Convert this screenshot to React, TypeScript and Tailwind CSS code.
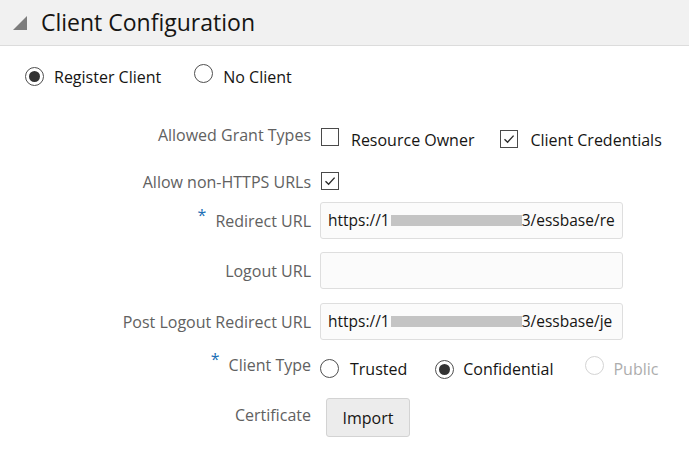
import React from 'react';

const font = { fontFamily: '"Open Sans", "Noto Sans", sans-serif' };

const Radio = ({ checked, disabled }: { checked?: boolean; disabled?: boolean }) => (
    <span
        className={`inline-flex h-[19px] w-[19px] shrink-0 items-center justify-center rounded-full border bg-white ${disabled ? 'border-[#d4d4d4]' : 'border-[#4f4f4f]'}`}
    >
        {checked && <span className="h-[11px] w-[11px] rounded-full bg-[#333]" />}
    </span>
);

const Checkbox = ({ checked }: { checked?: boolean }) => (
    <span className="inline-flex h-[18px] w-[18px] shrink-0 items-center justify-center border border-[#4a4a4a] bg-white">
        {checked && (
            <svg width="14" height="14" viewBox="0 0 14 14" fill="none">
                <path d="M2.5 7.2 L5.6 10.2 L11.6 3.6" stroke="#2b2b2b" strokeWidth="1.4" />
            </svg>
        )}
    </span>
);

const Label = ({ children, required }: { children: React.ReactNode; required?: boolean }) => (
    <div className="w-[320px] shrink-0 pr-[9px] text-right text-[#616161]">
        {required && <span className="relative -top-[6px] mr-[9px] text-[#1b6fb5]">*</span>}
        {children}
    </div>
);

const TextBox = ({ children }: { children?: React.ReactNode }) => (
    <div className="flex h-[37px] w-[303px] items-center overflow-hidden whitespace-nowrap rounded-[3px] border border-[#dedede] bg-[#fbfbfb] pl-[7px] text-[15.5px] text-[#161513]">
        {children}
    </div>
);

// part of the address is blurred out in the picture
const Masked = ({ pre, post }: { pre: string; post: string }) => (
    <span className="flex items-baseline">
        {pre}
        <span className="ml-[1px] inline-block h-[11px] w-[131px] bg-[#c4c4c4]" />
        {post}
    </span>
);

export default function App() {
    return (
        <div className="h-[468px] w-[689px] bg-white text-[16px]" style={font}>
            <div className="flex h-[46px] items-center border-b border-[#dcdcdc] bg-[#f1f1f1] pl-[13px]">
                <svg width="15" height="14" viewBox="0 0 15 14" className="mt-[1px]">
                    <polygon points="14,0 14,14 0,14" fill="#7d7d7d" />
                </svg>
                <span className="ml-[13px] text-[23px] text-[#161513]">Client Configuration</span>
            </div>

            <div className="flex items-center pl-[25px] pt-[18px] text-[#161513]">
                <Radio checked />
                <span className="ml-[10px]">Register Client</span>
                <span className="ml-[33px]"><Radio /></span>
                <span className="ml-[10px]">No Client</span>
            </div>

            <div className="mt-[34px] flex flex-col">
                <div className="flex items-start">
                    <Label>Allowed Grant Types</Label>
                    <div className="flex items-center pt-[5px] text-[#161513]">
                        <span className="ml-[1px]"><Checkbox /></span>
                        <span className="ml-[12px]">Resource Owner</span>
                        <span className="ml-[26px]"><Checkbox checked /></span>
                        <span className="ml-[12px]">Client Credentials</span>
                    </div>
                </div>

                <div className="mt-[18px] flex items-center">
                    <Label>Allow non-HTTPS URLs</Label>
                    <span className="ml-[1px]"><Checkbox checked /></span>
                </div>

                <div className="mt-[8px] flex items-center">
                    <Label required>Redirect URL</Label>
                    <TextBox><Masked pre="https://1" post="3/essbase/re" /></TextBox>
                </div>

                <div className="mt-[13px] flex items-center">
                    <Label>Logout URL</Label>
                    <TextBox />
                </div>

                <div className="mt-[14px] flex items-center">
                    <Label>Post Logout Redirect URL</Label>
                    <TextBox><Masked pre="https://1" post="3/essbase/je" /></TextBox>
                </div>

                <div className="mt-[13px] flex items-start">
                    <Label required>Client Type</Label>
                    <div className="flex items-center pt-[3px] text-[#161513]">
                        <Radio />
                        <span className="ml-[11px]">Trusted</span>
                        <span className="ml-[28px]"><Radio checked /></span>
                        <span className="ml-[9px]">Confidential</span>
                        <span className="ml-[32px]"><Radio disabled /></span>
                        <span className="ml-[9px] text-[#adadad]">Public</span>
                    </div>
                </div>

                <div className="mt-[22px] flex items-start">
                    <Label>Certificate</Label>
                    <button className="ml-[6px] -mt-[5px] flex h-[39px] w-[84px] items-center justify-center rounded-[3px] border border-[#d3d3d3] bg-[#ececec] text-[#161513]">
                        Import
                    </button>
                </div>
            </div>
        </div>
    );
}
